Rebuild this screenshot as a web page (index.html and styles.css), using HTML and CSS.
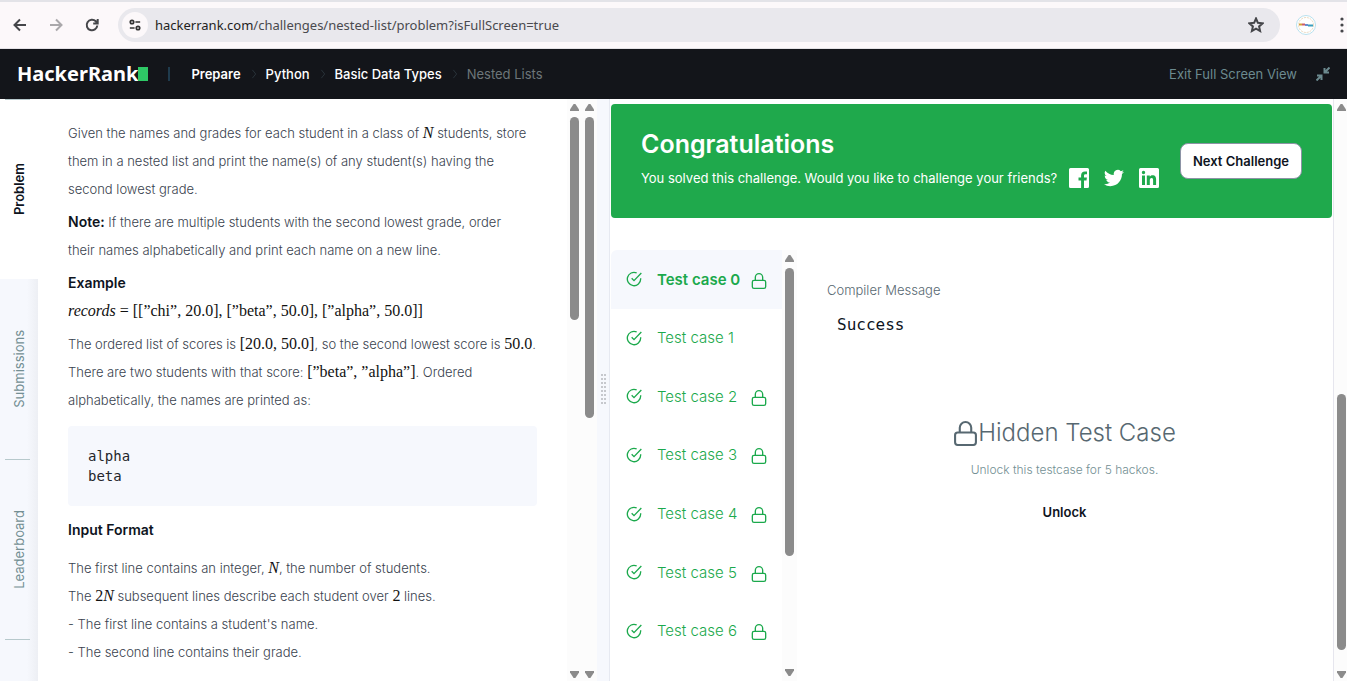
FILE: index.html
```html
<!DOCTYPE html>
<html lang="en">
<head>
<meta charset="utf-8">
<title>Nested Lists | HackerRank</title>
<link rel="stylesheet" href="styles.css">
</head>
<body>
<svg class="sprite" aria-hidden="true">
  <symbol id="check" viewBox="0 0 24 24"><path d="M22 11v1a10 10 0 1 1-6-9.100M23 3 12 14.500l-3.500-3.500"/></symbol>
  <symbol id="lock" viewBox="0 0 24 24"><rect x="2" y="11" width="20" height="12" rx="2.500"/><path d="M6.500 11V6.500a5.500 5.500 0 0 1 11 0V11"/></symbol>
  <symbol id="sep" viewBox="0 0 6 12"><path d="m1 1 4 5-4 5"/></symbol>
</svg>

<div class="browser">
  <div class="tabstrip"></div>
  <div class="toolbar">
    <button class="nav-btn" aria-label="Back"><svg viewBox="0 0 14 14"><path d="M13 7H2M7 1.500 1.500 7 7 12.500"/></svg></button>
    <button class="nav-btn off" aria-label="Forward" disabled><svg viewBox="0 0 14 14"><path d="M1 7h11M7 1.500 12.500 7 7 12.500"/></svg></button>
    <button class="nav-btn" aria-label="Reload"><svg viewBox="0 0 14 14"><path d="M12.300 7.500A5.300 5.300 0 1 1 10.800 3.300L12.500 5M12.700 1v4.500H8.200"/></svg></button>
    <div class="address">
      <button class="site" aria-label="Site information"><svg viewBox="0 0 14 14"><circle cx="3.500" cy="3.500" r="2"/><path d="M7.500 3.500H13M1 10.500h5.500"/><circle cx="10.500" cy="10.500" r="2"/></svg></button>
      <div class="url"><b>hackerrank.com</b>/challenges/nested-list/problem?isFullScreen=true</div>
      <button class="star" aria-label="Bookmark"><svg viewBox="0 0 16 16"><path d="m8 1.500 1.900 4.300 4.700.500-3.500 3.100 1 4.600L8 11.600 3.900 14l1-4.600L1.400 6.300l4.700-.500z"/></svg></button>
    </div>
    <button class="avatar" aria-label="Profile"><svg viewBox="0 0 20 20"><circle cx="10" cy="10" r="9.500" fill="#fff" stroke="#b9e1ee"/><circle cx="10" cy="10" r="7.500" fill="none" stroke="#ead7bd" stroke-dasharray="2 1"/><path d="M3 9.500h3" stroke="#d4a23a" stroke-width="2"/><path d="M6 9.500h3" stroke="#cc5a68" stroke-width="2"/><path d="M9 10h3" stroke="#6c8cd0" stroke-width="2"/><path d="M12 10.500h5" stroke="#3a9fbd" stroke-width="2"/></svg></button>
    <button class="menu" aria-label="Menu"><svg viewBox="0 0 4 16"><circle cx="2" cy="2" r="1.600"/><circle cx="2" cy="8" r="1.600"/><circle cx="2" cy="14" r="1.600"/></svg></button>
  </div>
</div>

<header class="site-header">
  <a class="logo" href="#">HackerRank<span class="logo-mark"></span></a>
  <span class="divider"></span>
  <nav class="crumbs">
    <a class="first" href="#">Prepare</a><svg class="sep"><use href="#sep"/></svg>
    <a href="#">Python</a><svg class="sep"><use href="#sep"/></svg>
    <a href="#">Basic Data Types</a><svg class="sep"><use href="#sep"/></svg>
    <span>Nested Lists</span>
  </nav>
  <a class="exit" href="#">Exit Full Screen View
    <svg viewBox="0 0 14 14"><path d="M13.500.500 8.500 5.500M8.500 1v4.500H13M.500 13.500l5-5M1 8.500h4.500V13"/></svg>
  </a>
</header>

<main class="workspace">
  <nav class="side">
    <a class="side-tab active" href="#"><span>Problem</span></a>
    <a class="side-tab" href="#"><span>Submissions</span></a>
    <a class="side-tab" href="#"><span>Leaderboard</span></a>
    <div class="side-rest"></div>
  </nav>

  <section class="problem">
    <p>Given the names and grades for each student in a class of <i class="m">N</i> students, store<br>them in a nested list and print the name(s) of any student(s) having the<br>second lowest grade.</p>
    <p><strong>Note:</strong> If there are multiple students with the second lowest grade, order<br>their names alphabetically and print each name on a new line.</p>
    <p><strong>Example</strong><br><span class="m"><i>records</i> = [[”chi”, 20.0], [”beta”, 50.0], [”alpha”, 50.0]]</span></p>
    <p>The ordered list of scores is <span class="m">[20.0, 50.0]</span>, so the second lowest score is <span class="m">50.0</span>.<br>There are two students with that score: <span class="m">[”beta”, ”alpha”]</span>. Ordered<br>alphabetically, the names are printed as:</p>
    <pre class="code">alpha
beta</pre>
    <h2>Input Format</h2>
    <p>The first line contains an integer, <i class="m">N</i>, the number of students.<br>The <span class="m">2<i>N</i></span> subsequent lines describe each student over <span class="m">2</span> lines.<br>- The first line contains a student's name.<br>- The second line contains their grade.</p>
  </section>
  <div class="bar inner"><i class="up"></i><div class="track"><div class="thumb"></div></div><i class="down"></i></div>
  <div class="bar outer"><i class="up"></i><div class="track"><div class="thumb"></div></div><i class="down"></i></div>
  <div class="resizer"><span></span></div>

  <section class="results">
    <div class="banner">
      <div class="banner-text">
        <h1>Congratulations</h1>
        <div class="share">
          <p>You solved this challenge. Would you like to challenge your friends?</p>
          <a href="#" aria-label="Facebook"><svg viewBox="0 0 20 20"><path fill-rule="evenodd" d="M1.500 0h17A1.500 1.500 0 0 1 20 1.500v17a1.500 1.500 0 0 1-1.500 1.500H15v-7.500h2.500l.400-3H15V7.800c0-.900.300-1.500 1.500-1.500H18V3.500A18 18 0 0 0 15.800 3.400c-2.200 0-3.700 1.300-3.700 3.800v2.300H9.500v3h2.600V20H1.500A1.500 1.500 0 0 1 0 18.500v-17A1.500 1.500 0 0 1 1.500 0z"/></svg></a>
          <a href="#" aria-label="Twitter"><svg viewBox="0 0 24 24"><path d="M23.950 4.570a10 10 0 0 1-2.820.770 4.960 4.960 0 0 0 2.160-2.720c-.950.550-2 .950-3.130 1.180a4.920 4.920 0 0 0-8.380 4.480C7.690 8.100 4.070 6.130 1.640 3.160a4.920 4.920 0 0 0 1.520 6.570 4.900 4.900 0 0 1-2.230-.610v.060a4.920 4.920 0 0 0 3.950 4.830 5 5 0 0 1-2.210.080 4.940 4.940 0 0 0 4.600 3.420A9.870 9.870 0 0 1 0 19.540a13.990 13.990 0 0 0 7.550 2.210c9.050 0 14-7.500 14-13.980 0-.210 0-.420-.020-.630a9.940 9.940 0 0 0 2.460-2.550z"/></svg></a>
          <a href="#" aria-label="LinkedIn"><svg viewBox="0 0 20 20"><path fill-rule="evenodd" d="M1.500 0h17A1.500 1.500 0 0 1 20 1.500v17a1.500 1.500 0 0 1-1.500 1.500h-17A1.500 1.500 0 0 1 0 18.500v-17A1.500 1.500 0 0 1 1.500 0zM3 7.500V17h3V7.500zM4.500 2.800a1.700 1.700 0 1 0 0 3.400 1.700 1.700 0 0 0 0-3.400zM7.800 7.500V17h3v-4.700c0-1.300.400-2.400 1.800-2.400s1.500 1.300 1.500 2.500V17h3v-5.200c0-2.700-.700-4.500-3.600-4.500-1.400 0-2.300.700-2.700 1.500V7.500z"/></svg></a>
        </div>
      </div>
      <button class="next">Next Challenge</button>
    </div>
    <div class="tests">
      <div class="test-list">
        <button class="test active"><svg><use href="#check"/></svg><span>Test case 0</span><svg class="lock"><use href="#lock"/></svg></button>
        <button class="test"><svg><use href="#check"/></svg><span>Test case 1</span></button>
        <button class="test"><svg><use href="#check"/></svg><span>Test case 2</span><svg class="lock"><use href="#lock"/></svg></button>
        <button class="test"><svg><use href="#check"/></svg><span>Test case 3</span><svg class="lock"><use href="#lock"/></svg></button>
        <button class="test"><svg><use href="#check"/></svg><span>Test case 4</span><svg class="lock"><use href="#lock"/></svg></button>
        <button class="test"><svg><use href="#check"/></svg><span>Test case 5</span><svg class="lock"><use href="#lock"/></svg></button>
        <button class="test"><svg><use href="#check"/></svg><span>Test case 6</span><svg class="lock"><use href="#lock"/></svg></button>
      </div>
      <div class="bar list"><i class="up"></i><div class="track"><div class="thumb"></div></div><i class="down"></i></div>
      <div class="detail">
        <h3>Compiler Message</h3>
        <pre class="message">Success</pre>
        <div class="hidden-case">
          <h4><svg><use href="#lock"/></svg>Hidden Test Case</h4>
          <p>Unlock this testcase for 5 hackos.</p>
          <button>Unlock</button>
        </div>
      </div>
    </div>
  </section>
  <div class="bar page"><i class="up"></i><div class="track"><div class="thumb"></div></div><i class="down"></i></div>
</main>
</body>
</html>
```
FILE: styles.css
```css
* { box-sizing: border-box; }
body {
  margin: 0;
  height: 100vh;
  display: flex;
  flex-direction: column;
  overflow: hidden;
  background: #fff;
  font-family: Inter, "Liberation Sans", sans-serif;
  font-size: 13px;
  color: #39424e;
}
a { color: inherit; text-decoration: none; }
button { font: inherit; color: inherit; background: none; border: 0; padding: 0; }
h1, h2, h3, h4, p, pre { margin: 0; }
svg { fill: none; stroke: currentColor; flex: none; }
.sprite { display: none; }

/* Browser toolbar */
.browser { background: #fcf8fa; border-bottom: 1px solid #e4e2e6; }
.tabstrip { height: 2px; width: 100%; background: #e3e3e8; }
.toolbar { display: flex; align-items: center; height: 46px; padding-left: 13px; }
.nav-btn { width: 14px; height: 14px; margin-right: 22px; color: #45464a; }
.nav-btn svg { display: block; width: 14px; height: 14px; stroke-width: 2; }
.nav-btn.off { color: #aaa8ab; }
.address {
  flex: 1;
  display: flex;
  align-items: center;
  height: 34px;
  margin-left: -3px;
  padding: 0 16px 0 4px;
  border-radius: 17px;
  background: #e9e8ed;
}
.address .site { display: grid; place-items: center; width: 26px; height: 26px; border-radius: 50%; background: #fcf8fa; color: #333; }
.site svg { width: 12px; height: 12px; stroke-width: 2; }
.url { flex: 1; margin-left: 7px; font-family: "Noto Sans", sans-serif; color: #4a4a4f; }
.url b { font-weight: 400; color: #1f1f22; }
.star svg { display: block; width: 16px; height: 16px; color: #45464a; stroke-width: 2; }
.avatar { margin: 0 22px 0 16px; }
.avatar svg { display: block; width: 20px; height: 20px; stroke-width: 1; }
.menu { width: 9px; }
.menu svg { display: block; width: 4px; height: 16px; margin-left: 2px; fill: #45464a; stroke: none; }

/* Site header */
.site-header {
  display: flex;
  align-items: center;
  height: 50px;
  flex: none;
  padding: 0 17px;
  background: #13151a;
  color: #fff;
}
.logo { display: flex; align-items: center; font: 700 20px/24px "Noto Sans", sans-serif; }
.logo-mark { width: 10px; height: 14px; background: #2ec866; }
.divider { width: 2px; height: 14px; margin: 0 21px 0 20px; background: #1f3b4d; }
.crumbs { display: flex; align-items: center; font-weight: 500; }
.crumbs .first { font-weight: 600; }
.crumbs span { color: #6d7679; font-weight: 400; }
.sep { width: 6px; height: 10px; margin: 0 9px 0 10px; color: #2c3840; }
.exit { display: flex; align-items: center; gap: 19px; margin-left: auto; color: #6c8a8f; }
.exit svg { width: 14px; height: 14px; stroke-width: 2; }

/* Workspace */
.workspace { flex: 1; min-height: 0; display: flex; }
.side { width: 38px; flex: none; display: flex; flex-direction: column; }
.side-tab {
  height: 180px;
  flex: none;
  display: flex;
  justify-content: center;
  align-items: center;
  background: linear-gradient(#b7c9cc, #b7c9cc) 5px 0 / 25px 1px no-repeat,
    linear-gradient(to right, #f6f8fd 27px, #edeff4);
  color: #738f93;
}
.side-tab:nth-child(2) { background: linear-gradient(to right, #f6f8fd 27px, #edeff4); }
.side-tab.active {
  background: linear-gradient(#b7c9cc, #b7c9cc) 5px 0 / 25px 1px no-repeat, #fff;
  color: #0e141e;
  font-weight: 600;
}
.side-tab span { writing-mode: vertical-rl; transform: rotate(180deg); }
.side-rest { flex: 1; background: linear-gradient(#b7c9cc, #b7c9cc) 5px 0 / 25px 1px no-repeat, linear-gradient(to right, #f6f8fd 27px, #edeff4); }

.problem {
  flex: 469 1 0;
  min-width: 0;
  overflow: hidden;
  padding: 20px 30px 0;
  font-weight: 300;
  line-height: 28px;
  white-space: nowrap;
}
.problem p { margin-bottom: 5px; }
.problem strong, .problem h2 { font-size: 14px; font-weight: 600; line-height: 28px; color: #0e141e; }
.m { font-family: "Liberation Serif", serif; font-size: 16px; font-weight: 400; line-height: 16px; color: #111; }
.code {
  margin: 12px 0 10px;
  padding: 20px;
  border-radius: 4px;
  background: #f6f8fd;
  font: 14px/20px "DejaVu Sans Mono", monospace;
  color: #24262b;
}
.problem h2 { margin-bottom: 10px; }

/* Scroll bars */
.bar { width: 15px; flex: none; display: flex; flex-direction: column; align-items: center; padding: 5px 0 3px; background: #fcfcfc; }
.up, .down { width: 9px; height: 7px; background: #8b8b8b; }
.up { clip-path: polygon(40% 0, 60% 0, 100% 80%, 100% 100%, 0 100%, 0 80%); }
.down { clip-path: polygon(40% 100%, 60% 100%, 100% 20%, 100% 0, 0 0, 0 20%); }
.track { flex: 1; width: 9px; margin: 6px 0; display: flex; flex-direction: column; }
.thumb { border-radius: 5px; background: #8b8b8b; }
.inner .thumb { height: 37%; }
.outer .thumb { height: 55%; }
.list { padding-bottom: 5px; }
.list .thumb { height: 73%; }
.page { border-left: 1px solid #e6e6ee; width: 14px; padding-left: 2px; }
.page .track { justify-content: flex-end; padding-bottom: 15px; }
.page .thumb { height: 48%; }

.resizer { width: 13px; flex: none; display: flex; align-items: center; padding-left: 3px; background: #f6f8fd; border-right: 1px solid #e6e9f1; }
.resizer span {
  width: 6px;
  height: 32px;
  background: conic-gradient(#c6c8cd 25%, transparent 0) 0 0 / 3px 4px;
}

/* Results */
.results { flex: 721 1 0; min-width: 0; display: flex; flex-direction: column; padding: 5px 1px 0; }
.banner {
  display: flex;
  align-items: center;
  justify-content: space-between;
  min-height: 114px;
  padding: 0 30px;
  border-radius: 4px;
  background: #1fa94c;
  color: #fff;
}
.banner-text { padding-bottom: 6px; }
.banner h1 { font-size: 25px; line-height: 32px; font-weight: 600; }
.share { display: flex; align-items: center; gap: 15px; margin-top: 8px; white-space: nowrap; }
.share p { margin-right: -3px; }
.share svg { display: block; width: 20px; height: 20px; fill: #fff; stroke: none; }
.next { height: 36px; padding: 0 12px; border: 1px solid #8c93a5; border-radius: 8px; background: #fff; color: #0e141e; font-weight: 600; white-space: nowrap; }

.tests { flex: 1; min-height: 0; display: flex; margin-top: 32px; }
.test-list { width: 171px; flex: none; display: grid; grid-template-rows: repeat(7, 1fr); padding-bottom: 21px; }
.test { display: flex; align-items: center; padding: 0 15px; font-size: 15px; font-weight: 300; color: #1ba94c; white-space: nowrap; }
.test.active { font-weight: 600; background: #f6f8fd; border-top-left-radius: 6px; }
.test span { width: 84px; margin: 0 10px 0 15px; text-align: left; }
.test svg { width: 16px; height: 16px; stroke-width: 2; }
.test .lock { margin-top: 3px; }
.detail { flex: 1; min-width: 0; padding: 30px 30px 0; }
.detail h3 { font-size: 13px; line-height: 20px; font-weight: 300; color: #576871; }
.message { margin: 15px 10px 0; font: 16px/20px "DejaVu Sans Mono", monospace; color: #0e141e; }
.hidden-case { display: flex; flex-direction: column; align-items: center; margin-top: 78px; }
.hidden-case h4 { display: flex; align-items: center; font-size: 24px; line-height: 40px; font-weight: 300; color: #576871; }
.hidden-case h4 svg { width: 25px; height: 25px; stroke-width: 2; }
.hidden-case p { margin-top: 7px; font-size: 12px; line-height: 20px; font-weight: 300; color: #738f93; }
.hidden-case button { margin-top: 22px; line-height: 20px; font-weight: 600; color: #0e141e; }
```
